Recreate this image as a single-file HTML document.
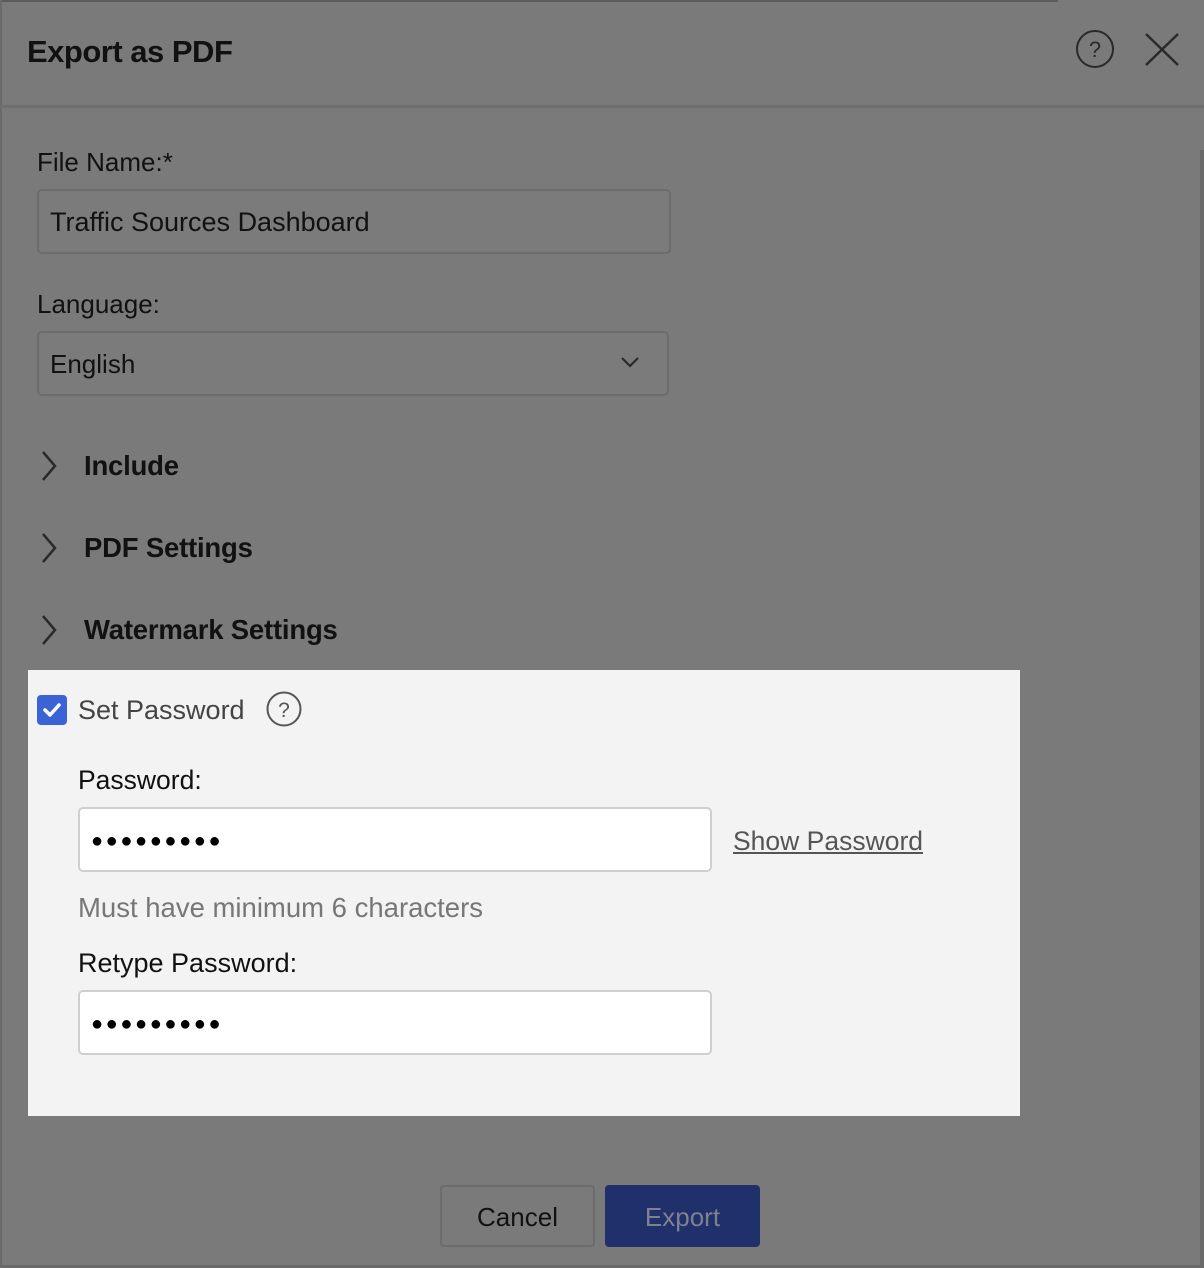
<!DOCTYPE html>
<html><head><meta charset="utf-8"><style>
*{margin:0;padding:0;box-sizing:border-box}
body{width:1204px;height:1268px;background:#7a7a7a;position:relative;overflow:hidden;font-family:"Liberation Sans",sans-serif;color:#111}
.a{position:absolute;white-space:nowrap}
.lbl{font-size:26px;line-height:30px;color:#111}
.inp{position:absolute;border:2px solid #6c6c6c;border-radius:5px;background:#7b7b7b}
.w{position:absolute;background:#fff;border:2px solid #cfcfcf;border-radius:5px}
.sec{font-size:27.5px;font-weight:bold;line-height:30px;color:#111;letter-spacing:-0.2px}
.dots{font-size:20px;letter-spacing:2.6px;line-height:30px;color:#000}
</style></head><body>
<div class="a" style="left:0;top:0;width:1058px;height:2px;background:#5c5c5c"></div>
<div class="a" style="left:0;top:0;width:2px;height:1268px;background:#6a6a6a"></div>
<div class="a" style="left:1200px;top:150px;width:4px;height:1118px;background:#6a6a6a"></div>
<div class="a" style="left:0;top:105px;width:1204px;height:3px;background:#6f6f6f"></div>
<div class="a" style="left:0;top:1265px;width:1204px;height:3px;background:#6a6a6a"></div>

<div class="a" style="left:27px;top:34px;font-size:31px;font-weight:bold;line-height:36px;letter-spacing:-0.5px">Export as PDF</div>
<svg class="a" style="left:1070px;top:24px" width="120" height="52">
<circle cx="25" cy="25" r="18" fill="none" stroke="#2a2a2a" stroke-width="2"/>
<text x="25" y="33" font-size="22" text-anchor="middle" fill="#2a2a2a" font-family="Liberation Sans">?</text>
<path d="M76 10 L108 41 M108 10 L76 41" stroke="#2a2a2a" stroke-width="2.5" fill="none"/>
</svg>

<div class="a lbl" style="left:37px;top:147px">File Name:*</div>
<div class="inp" style="left:37px;top:189px;width:634px;height:65px"></div>
<div class="a lbl" style="left:50px;top:207px;font-size:27px">Traffic Sources Dashboard</div>

<div class="a lbl" style="left:37px;top:289px">Language:</div>
<div class="inp" style="left:37px;top:331px;width:632px;height:65px"></div>
<div class="a lbl" style="left:50px;top:349px">English</div>
<svg class="a" style="left:620px;top:355px" width="22" height="16"><path d="M2 3 L10 11 L18 3" stroke="#2a2a2a" stroke-width="2.2" fill="none"/></svg>

<svg class="a" style="left:38px;top:450px" width="24" height="200">
<path d="M5 2 L17 16 L5 30" stroke="#2a2a2a" stroke-width="2.5" fill="none"/>
<path d="M5 84 L17 98 L5 112" stroke="#2a2a2a" stroke-width="2.5" fill="none"/>
<path d="M5 166 L17 180 L5 194" stroke="#2a2a2a" stroke-width="2.5" fill="none"/>
</svg>
<div class="a sec" style="left:84px;top:451px">Include</div>
<div class="a sec" style="left:84px;top:533px">PDF Settings</div>
<div class="a sec" style="left:84px;top:615px">Watermark Settings</div>

<div class="a" style="left:28px;top:670px;width:992px;height:446px;background:#f3f3f3"></div>
<div class="a" style="left:37px;top:695px;width:30px;height:30px;background:#3b63d8;border-radius:4px"></div>
<svg class="a" style="left:37px;top:695px" width="30" height="30"><path d="M8 15 L13 20 L22 10" stroke="#fff" stroke-width="3.5" fill="none" stroke-linecap="round" stroke-linejoin="round"/></svg>
<div class="a" style="left:78px;top:695px;font-size:27px;line-height:30px;color:#444">Set Password</div>
<svg class="a" style="left:265px;top:690px" width="40" height="40">
<circle cx="19" cy="19" r="16.5" fill="none" stroke="#555" stroke-width="2"/>
<text x="19" y="27" font-size="21" text-anchor="middle" fill="#555" font-family="Liberation Sans">?</text>
</svg>

<div class="a lbl" style="left:78px;top:765px;font-size:26.5px">Password:</div>
<div class="w" style="left:78px;top:807px;width:634px;height:65px"></div>
<div class="a dots" style="left:91px;top:826px">●●●●●●●●●</div>
<div class="a" style="left:733px;top:826px;font-size:26.5px;line-height:30px;color:#555;text-decoration:underline">Show Password</div>
<div class="a" style="left:78px;top:893px;font-size:27.5px;line-height:30px;color:#777">Must have minimum 6 characters</div>
<div class="a lbl" style="left:78px;top:948px;font-size:27px">Retype Password:</div>
<div class="w" style="left:78px;top:990px;width:634px;height:65px"></div>
<div class="a dots" style="left:91px;top:1009px">●●●●●●●●●</div>

<div class="a" style="left:440px;top:1185px;width:155px;height:62px;border:2px solid #6c6c6c;border-radius:4px"></div>
<div class="a" style="left:440px;top:1202px;width:155px;text-align:center;font-size:26px;line-height:30px;color:#111">Cancel</div>
<div class="a" style="left:605px;top:1185px;width:155px;height:62px;background:#1f306b;border-radius:4px"></div>
<div class="a" style="left:605px;top:1202px;width:155px;text-align:center;font-size:26px;line-height:30px;color:#7d8190">Export</div>
</body></html>
